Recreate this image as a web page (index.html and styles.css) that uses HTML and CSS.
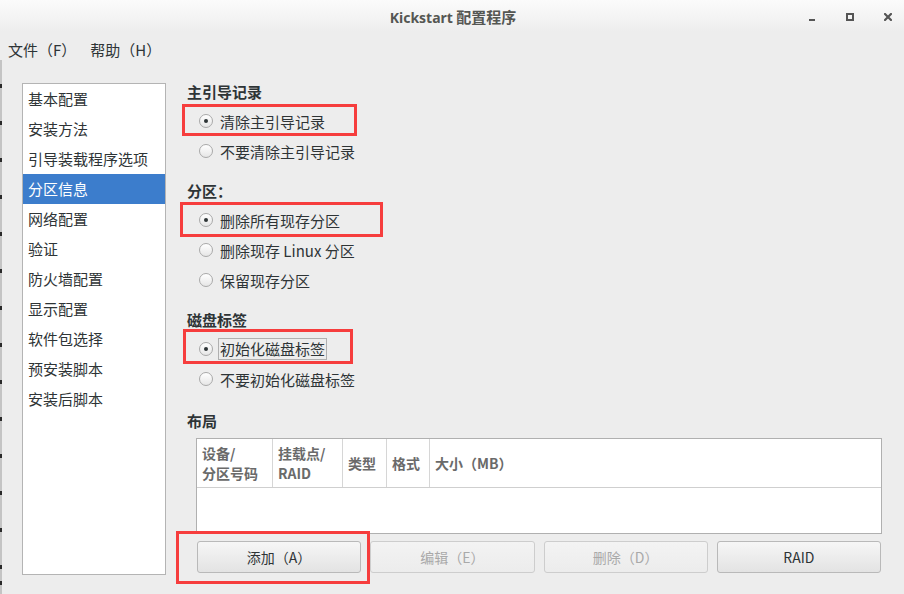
FILE: index.html
```html
<!DOCTYPE html>
<html lang="zh-CN">
<head>
<meta charset="utf-8">
<title>Kickstart 配置程序</title>
<link rel="stylesheet" href="styles.css">
</head>
<body>
<div class="window">
  <header class="titlebar">
    <div></div>
    <div class="title"><span class="title-latin">Kickstart</span> 配置程序</div>
    <div class="controls">
      <span class="ctl-min"></span>
      <span class="ctl-max"></span>
      <svg class="ctl-close" width="8" height="8" viewBox="0 0 8 8"><path d="M1 1 L7 7 M7 1 L1 7" stroke="#555" stroke-width="2.2" stroke-linecap="square"/></svg>
    </div>
  </header>
  <nav class="menubar">
    <span class="menu-item">文件（F）</span>
    <span class="menu-item">帮助（H）</span>
  </nav>
  <main class="main">
    <ul class="nav-list">
      <li class="nav-item">基本配置</li>
      <li class="nav-item">安装方法</li>
      <li class="nav-item">引导装载程序选项</li>
      <li class="nav-item selected">分区信息</li>
      <li class="nav-item">网络配置</li>
      <li class="nav-item">验证</li>
      <li class="nav-item">防火墙配置</li>
      <li class="nav-item">显示配置</li>
      <li class="nav-item">软件包选择</li>
      <li class="nav-item">预安装脚本</li>
      <li class="nav-item">安装后脚本</li>
    </ul>
    <section class="panel">
      <div class="group">
        <h3 class="heading">主引导记录</h3>
        <div class="radios">
          <label class="radio-row"><span class="radio checked"></span><span>清除主引导记录</span></label>
          <label class="radio-row"><span class="radio"></span><span>不要清除主引导记录</span></label>
        </div>
      </div>
      <div class="group">
        <h3 class="heading">分区<span class="colon">：</span></h3>
        <div class="radios">
          <label class="radio-row"><span class="radio checked"></span><span>删除所有现存分区</span></label>
          <label class="radio-row"><span class="radio"></span><span>删除现存 Linux 分区</span></label>
          <label class="radio-row"><span class="radio"></span><span>保留现存分区</span></label>
        </div>
      </div>
      <div class="group">
        <h3 class="heading">磁盘标签</h3>
        <div class="radios">
          <label class="radio-row"><span class="radio checked"></span><span class="focus">初始化磁盘标签</span></label>
          <label class="radio-row"><span class="radio"></span><span>不要初始化磁盘标签</span></label>
        </div>
      </div>
      <div class="group layout">
        <h3 class="heading">布局</h3>
        <div class="table">
          <div class="thead">
            <div class="th c1">设备/<br>分区号码</div>
            <div class="th c2">挂载点/<br>RAID</div>
            <div class="th c3">类型</div>
            <div class="th c4">格式</div>
            <div class="th c5">大小（MB）</div>
          </div>
        </div>
        <div class="buttons">
          <button class="btn">添加（A）</button>
          <button class="btn disabled">编辑（E）</button>
          <button class="btn disabled">删除（D）</button>
          <button class="btn">RAID</button>
        </div>
      </div>
    </section>
  </main>
  <div class="mark mark-1"></div>
  <div class="mark mark-2"></div>
  <div class="mark mark-3"></div>
  <div class="mark mark-4"></div>
</div>
</body>
</html>
```
FILE: styles.css
```css
* { box-sizing: border-box; }
html, body { margin: 0; padding: 0; }
body {
  width: 904px;
  height: 594px;
  overflow: hidden;
  background: #ededed;
  font-family: "Noto Sans CJK SC", "Noto Sans", sans-serif;
  font-size: 15px;
  color: #2e3436;
}
.window {
  position: relative;
  width: 904px;
  height: 594px;
}
.window::before {
  content: "";
  position: absolute;
  left: 0;
  top: 60px;
  bottom: 0;
  width: 2px;
  background: repeating-linear-gradient(to bottom, #2a2a2a 0 4px, #c4c4c4 4px 37px);
  background-position: 0 -13px;
}
.titlebar {
  height: 32px;
  display: grid;
  grid-template-columns: 1fr auto 1fr;
  align-items: center;
  background: linear-gradient(to bottom, #fbfbfb 0%, #f3f3f3 60%, #ededed 100%);
}
.title {
  font-size: 15px;
  font-weight: bold;
  color: #555753;
  padding-left: 2px;
}
.title-latin {
  font-family: "Noto Sans", sans-serif;
  font-size: 14px;
}
.controls {
  justify-self: end;
  display: flex;
  align-items: center;
  padding-right: 12px;
  padding-top: 2px;
}
.ctl-min {
  width: 6px;
  height: 2px;
  background: #555;
  margin-top: 5px;
}
.ctl-max {
  width: 8px;
  height: 8px;
  border: 2px solid #555;
  margin-left: 31px;
}
.ctl-close { margin-left: 30px; display: block; }
.menubar {
  height: 34px;
  display: flex;
  align-items: center;
  gap: 14px;
  padding-left: 8px;
}
.main {
  display: flex;
  padding: 17px 0 0 22px;
}
.nav-list {
  list-style: none;
  margin: 0;
  padding: 0;
  width: 144px;
  height: 492px;
  background: #fff;
  border: 1px solid #b4b4b4;
}
.nav-item {
  height: 30px;
  line-height: 30px;
  padding-left: 5px;
  white-space: nowrap;
}
.nav-item.selected {
  background: #3c7dcc;
  color: #fff;
}
.panel {
  margin-left: 21px;
  width: 695px;
  display: flex;
  flex-direction: column;
  gap: 16px;
}
.heading {
  margin: 0;
  font-size: 15px;
  font-weight: bold;
  line-height: 18px;
  height: 18px;
}
.colon {
  font-family: "Noto Sans CJK TC", "Noto Sans CJK SC", sans-serif;
}
.radios {
  margin-top: 5px;
  display: flex;
  flex-direction: column;
}
.radio-row {
  height: 30px;
  display: flex;
  align-items: center;
  gap: 7px;
  padding-left: 12px;
}
.radio {
  width: 14px;
  height: 14px;
  border-radius: 50%;
  border: 1px solid #a9a9a9;
  background: linear-gradient(to bottom, #ffffff, #e6e6e6);
  display: flex;
  align-items: center;
  justify-content: center;
  flex: none;
}
.radio.checked::after {
  content: "";
  width: 4px;
  height: 4px;
  border-radius: 50%;
  background: #2e3436;
}
.focus {
  margin-left: -2px;
  padding: 0 1px;
  border: 1px solid #b0b0b0;
  line-height: 20px;
}
.layout { margin-top: 2px; }
.table {
  margin: 8px 0 0 9px;
  width: 686px;
  height: 96px;
  background: #fff;
  border: 1px solid #b0b0b0;
}
.thead {
  display: flex;
  height: 49px;
  border-bottom: 1px solid #cfcfcf;
}
.th {
  display: flex;
  align-items: center;
  padding-left: 5px;
  font-size: 14px;
  font-weight: bold;
  color: #6a6a6a;
  line-height: 20px;
  border-right: 1px solid #d6d6d6;
}
.c1 { width: 76px; }
.c2 { width: 70px; }
.c3 { width: 44px; }
.c4 { width: 43px; }
.c5 { flex: 1; border-right: none; }
.buttons {
  margin: 7px 0 0 10px;
  width: 684px;
  display: flex;
  gap: 9px;
}
.btn {
  flex: 1;
  height: 32px;
  border: 1px solid #b9b9b9;
  border-radius: 3px;
  background: linear-gradient(to bottom, #f6f6f6, #e3e3e3);
  font-family: "Noto Sans CJK SC", "Noto Sans", sans-serif;
  font-size: 14px;
  color: #2e3436;
  padding: 0;
}
.btn.disabled {
  background: linear-gradient(to bottom, #f3f3f3, #ececec);
  border-color: #cdcdcd;
  color: #a9a9a9;
}
.mark {
  position: absolute;
  border: 3px solid #f63d3d;
}
.mark-1 { left: 182px; top: 104px; width: 175px; height: 32px; }
.mark-2 { left: 180px; top: 202px; width: 203px; height: 35px; }
.mark-3 { left: 183px; top: 329px; width: 170px; height: 35px; }
.mark-4 { left: 176px; top: 531px; width: 194px; height: 53px; }
```
